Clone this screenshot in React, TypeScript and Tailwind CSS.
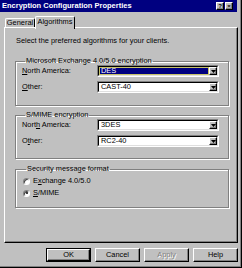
const raised =
  'border border-t-white border-l-white border-r-black border-b-black shadow-[inset_-1px_-1px_0_#808080]'

function Combo({ value, focused }: { value: string; focused?: boolean }) {
  return (
    <div className="flex h-[12px] w-[122px] border border-t-[#808080] border-l-[#808080] border-b-white border-r-white">
      <div className="flex flex-1 items-stretch border border-t-black border-l-black border-b-[#dfdfdf] border-r-[#dfdfdf] bg-white">
        <div
          className={
            focused
              ? 'flex flex-1 items-center border border-[#c8c46a] bg-[#000080] pl-[1px] text-white'
              : 'flex flex-1 items-center pl-[2px]'
          }
        >
          {value}
        </div>
        <div className={`flex w-[8px] items-center justify-center bg-[#c0c0c0] ${raised}`}>
          <svg width="5" height="3" viewBox="0 0 5 3">
            <path d="M0 0h5L2.5 3z" fill="black" />
          </svg>
        </div>
      </div>
    </div>
  )
}

function Row({ label, children }: { label: React.ReactNode; children: React.ReactNode }) {
  return (
    <div className="flex items-center">
      <div className="w-[75px]">{label}</div>
      {children}
    </div>
  )
}

function Group({ title, className, children }: { title: string; className: string; children: React.ReactNode }) {
  return (
    <fieldset
      className={`mr-[8px] border border-[#808080] shadow-[inset_1px_1px_0_white,1px_1px_0_white] ${className}`}
    >
      <legend className="ml-[3px] px-[1px]">{title}</legend>
      {children}
    </fieldset>
  )
}

function Radio({ checked, children }: { checked?: boolean; children: React.ReactNode }) {
  return (
    <div className="flex items-center gap-[3px]">
      <div className="flex h-[7px] w-[7px] items-center justify-center rounded-full border border-t-[#808080] border-l-[#808080] border-b-white border-r-white bg-white shadow-[inset_1px_1px_0_#404040]">
        {checked && <div className="h-[2px] w-[2px] rounded-full bg-black" />}
      </div>
      <span>{children}</span>
    </div>
  )
}

function Button({ label, primary, disabled }: { label: string; primary?: boolean; disabled?: boolean }) {
  return (
    <div className={`h-[14px] w-[45px] ${primary ? 'border border-black' : ''}`}>
      <div
        className={`flex h-full w-full items-center justify-center bg-[#c0c0c0] ${raised} ${
          disabled ? 'text-[#808080] [text-shadow:1px_1px_0_white]' : ''
        }`}
      >
        {label}
      </div>
    </div>
  )
}

export default function App() {
  return (
    <div className="h-[268px] w-[242px] overflow-hidden bg-[#c0c0c0] font-['Liberation_Sans',Arial,sans-serif] text-[7.4px] leading-[8px] text-black">
      <div className="flex h-full flex-col border-r border-b border-r-black border-b-black shadow-[inset_-1px_-1px_0_#808080]">
        {/* title bar */}
        <div className="flex h-[12px] w-[237px] items-center justify-between bg-[#000080] pl-[2px] pr-[4px]">
          <span className="text-[7.5px] font-bold text-white">Encryption Configuration Properties</span>
          <div className="flex gap-[1px]">
            <div className={`flex h-[8px] w-[8px] items-center justify-center bg-[#c0c0c0] text-[6px] font-bold leading-none ${raised}`}>
              ?
            </div>
            <div className={`flex h-[8px] w-[8px] items-center justify-center bg-[#c0c0c0] text-[6px] font-bold leading-none ${raised}`}>
              ×
            </div>
          </div>
        </div>

        {/* tabs */}
        <div className="mt-[4px] flex h-[11px] items-end pl-[5px]">
          <div className="flex h-[9px] w-[30px] items-center justify-center rounded-t-[2px] border-t border-l border-r border-t-white border-l-white border-r-black">
            General
          </div>
          <div className="relative z-10 -mb-[2px] flex h-[13px] w-[40px] items-start justify-center rounded-t-[2px] border-t border-l border-r border-t-white border-l-white border-r-black bg-[#c0c0c0] pt-[1px]">
            Algorithms
          </div>
        </div>

        {/* panel */}
        <div className={`ml-[4px] flex h-[216px] w-[234px] flex-col pl-[10px] ${raised}`}>
          <div className="mt-[9px] pl-[1px]">Select the preferred algorithms for your clients.</div>

          <Group title="Microsoft Exchange 4.0/5.0 encryption" className="mt-[12px] px-[6px] pt-0 pb-[12px]">
            <div className="flex flex-col gap-[4px]">
              <Row label={<><u>N</u>orth America:</>}>
                <Combo value="DES" focused />
              </Row>
              <Row label={<><u>O</u>ther:</>}>
                <Combo value="CAST-40" />
              </Row>
            </div>
          </Group>

          <Group title="S/MIME encryption" className="mt-[5px] px-[6px] pt-0 pb-[11px]">
            <div className="flex flex-col gap-[4px]">
              <Row label={<>Nort<u>h</u> America:</>}>
                <Combo value="3DES" />
              </Row>
              <Row label={<>O<u>t</u>her:</>}>
                <Combo value="RC2-40" />
              </Row>
            </div>
          </Group>

          <Group title="Security message format" className="mt-[6px] px-[7px] pt-[4px] pb-[10px]">
            <div className="flex flex-col gap-[4px]">
              <Radio>
                E<u>x</u>change 4.0/5.0
              </Radio>
              <Radio checked>
                <u>S</u>/MIME
              </Radio>
            </div>
          </Group>
        </div>

        {/* buttons */}
        <div className="mt-[5px] flex w-[238px] justify-end gap-[4px]">
          <Button label="OK" primary />
          <Button label="Cancel" />
          <Button label="Apply" disabled />
          <Button label="Help" />
        </div>
      </div>
    </div>
  )
}
